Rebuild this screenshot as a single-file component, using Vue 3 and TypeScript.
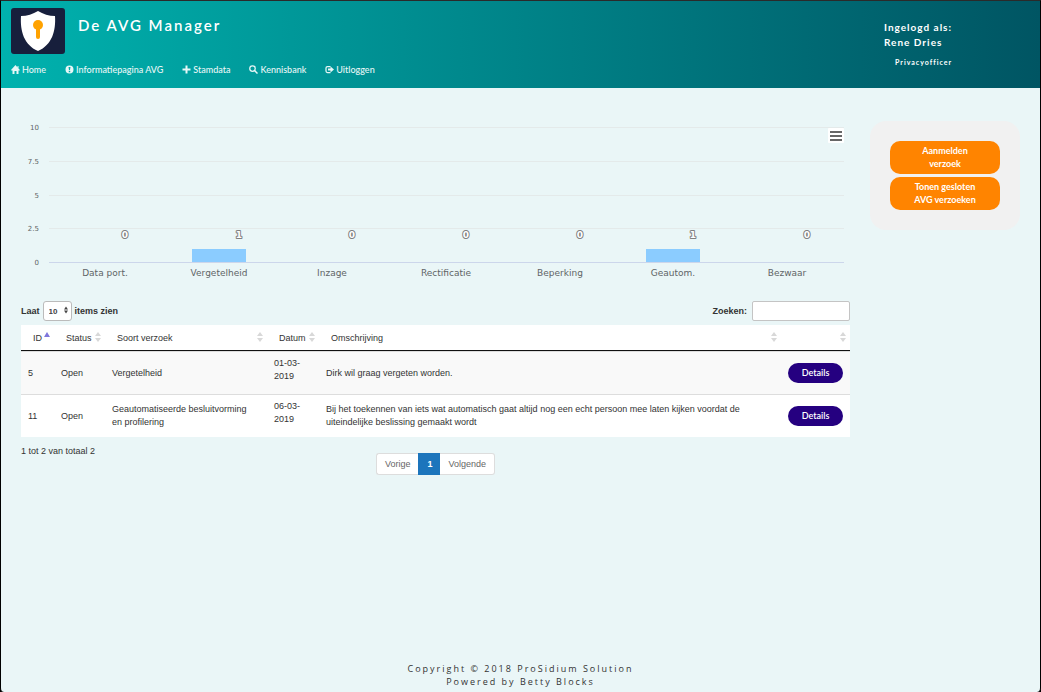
<script setup lang="ts">
import { computed, ref } from 'vue'

interface Category {
  label: string
  value: number
}

interface AvgRequest {
  id: number
  status: string
  kind: string
  date: string
  description: string
}

const navItems = [
  { label: 'Home', icon: 'home' },
  { label: 'Informatiepagina AVG', icon: 'info' },
  { label: 'Stamdata', icon: 'plus' },
  { label: 'Kennisbank', icon: 'search' },
  { label: 'Uitloggen', icon: 'logout' },
]

const categories: Category[] = [
  { label: 'Data port.', value: 0 },
  { label: 'Vergetelheid', value: 1 },
  { label: 'Inzage', value: 0 },
  { label: 'Rectificatie', value: 0 },
  { label: 'Beperking', value: 0 },
  { label: 'Geautom.', value: 1 },
  { label: 'Bezwaar', value: 0 },
]

const chart = { width: 829, height: 200, left: 28, right: 823, top: 39, bottom: 174, max: 10 }
const ticks = [10, 7.5, 5, 2.5, 0]
const barWidth = 54
const slot = (chart.right - chart.left) / categories.length

const yOf = (value: number): number =>
  Math.round(chart.bottom - (value / chart.max) * (chart.bottom - chart.top))

const bars = computed(() =>
  categories.map((c, i) => {
    const center = Math.floor(chart.left + slot * (i + 0.5))
    const top = yOf(c.value)
    return { ...c, center, top, height: chart.bottom - top }
  }),
)

const requests: AvgRequest[] = [
  { id: 5, status: 'Open', kind: 'Vergetelheid', date: '01-03-2019', description: 'Dirk wil graag vergeten worden.' },
  {
    id: 11,
    status: 'Open',
    kind: 'Geautomatiseerde besluitvorming en profilering',
    date: '06-03-2019',
    description:
      'Bij het toekennen van iets wat automatisch gaat altijd nog een echt persoon mee laten kijken voordat de uiteindelijke beslissing gemaakt wordt',
  },
]

const columns = [
  { key: 'id', label: 'ID' },
  { key: 'status', label: 'Status' },
  { key: 'kind', label: 'Soort verzoek' },
  { key: 'date', label: 'Datum' },
  { key: 'description', label: 'Omschrijving' },
  { key: 'action', label: '' },
]

const pageSize = ref('10')
const query = ref('')
const visible = computed(() =>
  requests.filter((r) => Object.values(r).join(' ').toLowerCase().includes(query.value.toLowerCase())),
)
</script>

<template>
  <div class="page">
    <header class="header">
      <div class="brand">
        <svg class="logo" viewBox="0 0 54 46" aria-hidden="true">
          <rect width="54" height="46" rx="3" fill="#171f3c" />
          <path d="M27 3 C22 6 16 8 10 8 C9 23 13 37 27 43 C41 37 45 23 44 8 C38 8 32 6 27 3Z" fill="#fff" />
          <circle cx="27" cy="17" r="5" fill="#ffa200" />
          <path d="M27 18V29" stroke="#ffa200" stroke-width="4" stroke-linecap="round" />
        </svg>
        <h1 class="title">De AVG Manager</h1>
      </div>
      <nav class="nav">
        <a v-for="item in navItems" :key="item.label" href="#" class="nav-link">
          <svg class="nav-icon" viewBox="0 0 18 18" aria-hidden="true">
            <path v-if="item.icon === 'home'" fill="currentColor" d="M9 0 0 10l1 1h2v7h4v-6h4v6h4v-7h2l1-1-3-3V2h-2v3z" />
            <path v-else-if="item.icon === 'info'" fill="currentColor" fill-rule="evenodd" d="M9 1a8 8 0 1 0 0 16A8 8 0 0 0 9 1zM7 4h4l-1 6H8zM7.500 11.500h3v3h-3z" />
            <path v-else-if="item.icon === 'plus'" fill="currentColor" d="M7 1h4v6h6v4h-6v6H7v-6H1V7h6z" />
            <g v-else-if="item.icon === 'search'" fill="none" stroke="currentColor">
              <circle cx="7" cy="7" r="5.500" stroke-width="2.500" />
              <path d="m11 11 6 6" stroke-width="3" />
            </g>
            <g v-else>
              <path d="M11 3H5Q2 3 2 6v6q0 3 3 3h6" fill="none" stroke="currentColor" stroke-width="2.500" />
              <path d="M6 7h5V3l7 6-7 6v-4H6z" fill="currentColor" />
            </g>
          </svg>
          <span>{{ item.label }}</span>
        </a>
      </nav>
      <div class="account">
        <div>Ingelogd als:</div>
        <div>Rene Dries</div>
        <div class="role">Privacyofficer</div>
      </div>
    </header>

    <main class="main">
      <section class="content">
        <div class="chart">
          <svg class="chart-svg" :viewBox="`0 0 ${chart.width} ${chart.height}`" role="img" aria-label="Aantal verzoeken per soort">
            <g v-for="t in ticks" :key="t">
              <rect :x="chart.left" :y="yOf(t)" :width="chart.right - chart.left" height="1" :class="t === 0 ? 'axis' : 'gridline'" />
              <text class="tick" x="18" :y="yOf(t) + 3" text-anchor="end">{{ t }}</text>
            </g>
            <g v-for="b in bars" :key="b.label">
              <rect class="bar" :x="b.center - barWidth / 2" :y="b.top" :width="barWidth" :height="b.height" />
              <text class="value" :x="b.center + 20" y="150" text-anchor="middle">{{ b.value }}</text>
              <text class="category" :x="b.center" y="188" text-anchor="middle">{{ b.label }}</text>
            </g>
          </svg>
          <button class="chart-menu" type="button" aria-label="Grafiekmenu">
            <span></span><span></span><span></span>
          </button>
        </div>

        <div class="toolbar">
          <label class="length">
            Laat
            <span class="select-wrap">
              <select v-model="pageSize" class="select">
                <option>10</option>
                <option>25</option>
                <option>50</option>
              </select>
              <svg class="select-arrows" viewBox="0 0 5 9" aria-hidden="true">
                <path d="M0 4 2.500 0 5 4zM0 5h5L2.500 9z" fill="#444" />
              </svg>
            </span>
            items zien
          </label>
          <label class="search">Zoeken: <input v-model="query" class="search-input" type="search" /></label>
        </div>

        <table class="table">
          <colgroup>
            <col v-for="c in columns" :key="c.key" :class="`col-${c.key}`" />
          </colgroup>
          <thead>
            <tr>
              <th v-for="c in columns" :key="c.key" scope="col">
                <div class="th-inner">
                  <span>{{ c.label }}</span>
                  <svg class="sort" viewBox="0 0 6 10" aria-hidden="true">
                    <path v-if="c.key === 'id'" d="M0 5 3 0 6 5z" fill="#7f76dc" />
                    <path v-else d="M0 4 3 0 6 4zM0 6h6L3 10z" fill="#d8d8d8" />
                  </svg>
                </div>
              </th>
            </tr>
          </thead>
          <tbody>
            <tr v-for="r in visible" :key="r.id">
              <td>{{ r.id }}</td>
              <td>{{ r.status }}</td>
              <td class="kind">{{ r.kind }}</td>
              <td class="date">{{ r.date }}</td>
              <td>{{ r.description }}</td>
              <td><button class="details" type="button">Details</button></td>
            </tr>
          </tbody>
        </table>

        <div class="table-info">1 tot 2 van totaal 2</div>
        <nav class="pagination" aria-label="Paginering">
          <button type="button" class="page-btn">Vorige</button>
          <button type="button" class="page-btn current">1</button>
          <button type="button" class="page-btn">Volgende</button>
        </nav>
      </section>

      <aside class="side">
        <button type="button" class="side-btn">Aanmelden<br />verzoek</button>
        <button type="button" class="side-btn">Tonen gesloten<br />AVG verzoeken</button>
      </aside>
    </main>

    <footer class="footer">
      <div>Copyright © 2018 ProSidium Solution</div>
      <div>Powered by Betty Blocks</div>
    </footer>
  </div>
</template>

<style>
body {
  margin: 0;
  background: #000;
}
</style>

<style scoped>
.page {
  box-sizing: border-box;
  min-height: 100vh;
  display: flex;
  flex-direction: column;
  border: 1px solid #000;
  border-top-color: #2a2a2a;
  border-bottom: 0;
  border-radius: 0 0 4px 4px;
  background: #eaf6f7;
  color: #333;
  font: 9px/13px "Liberation Sans", Arial, sans-serif;
}

button {
  font: inherit;
  cursor: pointer;
}

.header {
  display: grid;
  grid-template-columns: 1fr 156px;
  grid-template-rows: 54px 33px;
  padding-left: 10px;
  background: linear-gradient(90deg, #00b2ae, #005563);
  color: #fff;
  font-family: Lato, sans-serif;
}

.brand {
  display: flex;
  gap: 13px;
  padding-top: 7px;
}

.logo {
  width: 54px;
  height: 46px;
}

.title {
  margin: 7px 0 0;
  font: 600 15px/20px Lato, sans-serif;
  letter-spacing: 2px;
}

.nav {
  grid-row: 2;
  display: flex;
  gap: 19px;
  padding-top: 8px;
}

.nav-link {
  display: flex;
  align-items: center;
  gap: 2px;
  height: 13px;
  color: #e8f7f7;
  font-weight: 500;
  text-decoration: none;
  white-space: nowrap;
}

.nav-icon {
  width: 9px;
  height: 9px;
}

.account {
  grid-column: 2;
  grid-row: 1 / 3;
  padding-top: 19px;
  font-size: 10px;
  font-weight: 700;
  line-height: 15px;
  letter-spacing: 1px;
}

.role {
  padding: 5px 0 0 11px;
  font-size: 7px;
}

.main {
  flex: 1;
  display: flex;
  align-items: flex-start;
  gap: 20px;
  padding: 0 20px;
}

.content {
  flex: 1;
  min-width: 0;
}

.chart {
  position: relative;
}

.chart-svg {
  display: block;
  width: 100%;
}

.gridline {
  fill: #e4eaea;
}

.axis {
  fill: #ccd6eb;
}

.bar {
  fill: #8bccff;
}

.tick,
.category,
.value {
  font-family: "DejaVu Sans", Verdana, sans-serif;
  fill: #606466;
}

.tick {
  font-size: 7px;
}

.category {
  font-size: 9px;
}

.value {
  font-size: 9px;
  font-weight: 700;
  fill: #fff;
  stroke: #808080;
  stroke-width: 2px;
  stroke-linejoin: round;
  paint-order: stroke;
}

.chart-menu {
  position: absolute;
  top: 40px;
  right: 6px;
  display: flex;
  flex-direction: column;
  justify-content: center;
  gap: 2px;
  width: 16px;
  height: 15px;
  padding: 0 2px;
  border: 0;
  border-radius: 1px;
  background: #fff;
}

.chart-menu span {
  height: 2px;
  background: #666;
}

.toolbar {
  display: flex;
  justify-content: space-between;
  align-items: center;
  margin: 13px 0 4px;
  font-weight: 700;
}

.length,
.search {
  display: flex;
  align-items: center;
  gap: 3px;
}

.select-wrap {
  position: relative;
  display: flex;
}

.select {
  appearance: none;
  box-sizing: border-box;
  width: 29px;
  height: 20px;
  padding: 0 0 0 5px;
  border: 1px solid #bbb;
  border-radius: 3px;
  background: #fff;
  color: #444;
  font: 700 8px/13px "Liberation Sans", Arial, sans-serif;
}

.select-arrows {
  position: absolute;
  top: 5px;
  right: 4px;
  width: 4px;
  height: 8px;
  pointer-events: none;
}

.search {
  gap: 5px;
}

.search-input {
  box-sizing: border-box;
  width: 98px;
  height: 20px;
  padding: 0 4px;
  border: 1px solid #c4c4c4;
  border-radius: 2px;
  background: #fff;
  font: inherit;
}

.table {
  width: 100%;
  table-layout: fixed;
  border-collapse: separate;
  border-spacing: 0;
  background: #fff;
}

.col-id {
  width: 33px;
}

.col-status {
  width: 51px;
}

.col-kind {
  width: 162px;
}

.col-date {
  width: 52px;
}

.col-action {
  width: 69px;
}

th {
  padding: 7px 4px 5px 12px;
  border-bottom: 1px solid #111;
  font-weight: 400;
  text-align: left;
}

.th-inner {
  display: flex;
  justify-content: space-between;
  align-items: flex-start;
  min-height: 13px;
}

.sort {
  flex: none;
  width: 6px;
  height: 10px;
}

td {
  padding: 5px 7px;
  border-top: 1px solid #ddd;
}

td.kind {
  padding-right: 12px;
}

td.date {
  padding-bottom: 11px;
}

tbody tr:nth-child(odd) {
  background: #f9f9f9;
}

.details {
  display: block;
  width: 55px;
  height: 20px;
  margin-left: auto;
  padding: 0;
  border: 0;
  border-radius: 10px;
  background: #250080;
  color: #fff;
  font: 600 9px/20px Lato, sans-serif;
}

.table-info {
  padding-top: 8px;
}

.pagination {
  display: flex;
  justify-content: center;
  margin-top: -5px;
}

.page-btn {
  height: 22px;
  padding: 0 8px;
  border: 1px solid #ddd;
  background: #fff;
  color: #666;
}

.page-btn:first-child {
  border-right: 0;
  border-radius: 3px 0 0 3px;
}

.page-btn:last-child {
  border-left: 0;
  border-radius: 0 3px 3px 0;
}

.page-btn.current {
  width: 22px;
  border-color: #1c75bc;
  background: #1c75bc;
  color: #fff;
  font-weight: 700;
}

.side {
  box-sizing: border-box;
  width: 150px;
  display: flex;
  flex-direction: column;
  gap: 3px;
  margin-top: 33px;
  padding: 20px;
  border-radius: 16px;
  background: #f1f1f1;
}

.side-btn {
  height: 33px;
  padding: 0 0 2px;
  border: 0;
  border-radius: 10px;
  background: #ff8400;
  color: #fff;
  font: 700 9px/13px Lato, sans-serif;
}

.footer {
  padding-bottom: 4px;
  font-family: "Open Sans", sans-serif;
  text-align: center;
  letter-spacing: 2px;
}
</style>
